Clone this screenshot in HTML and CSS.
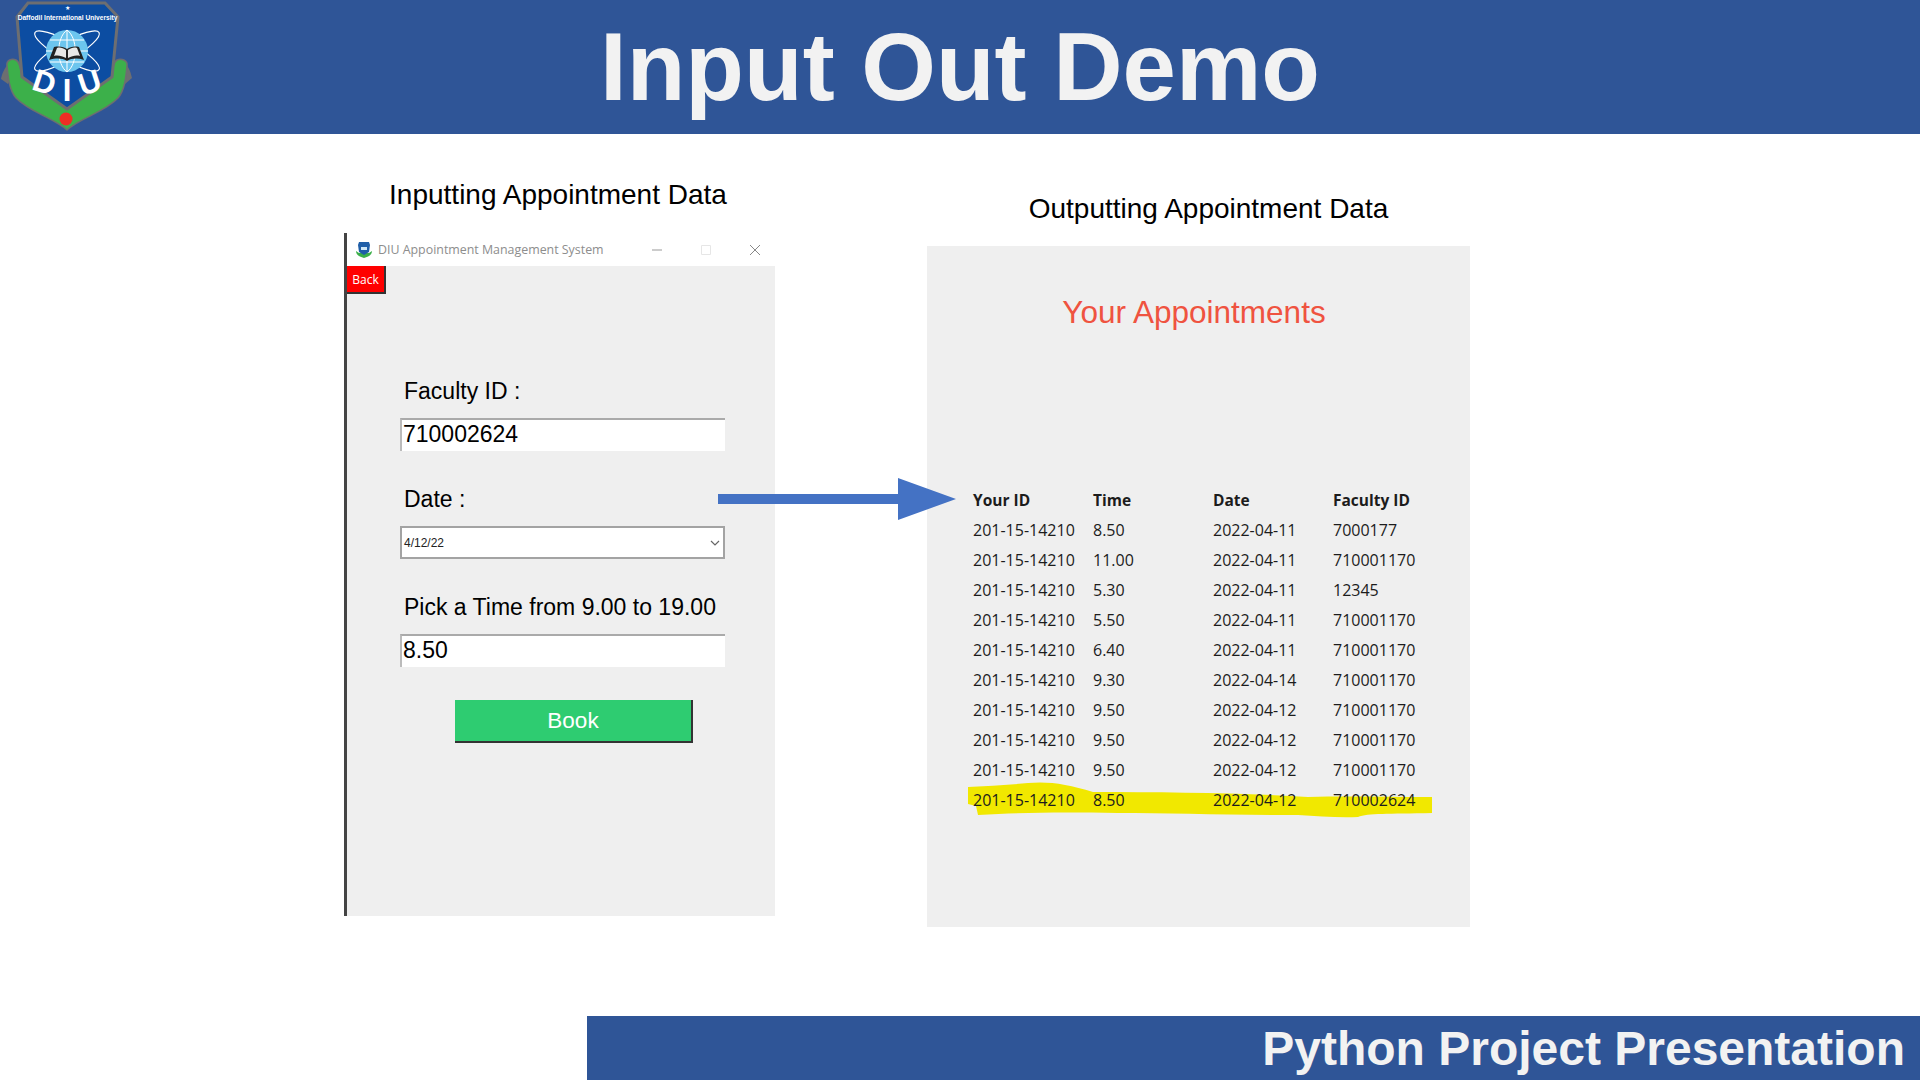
FILE: index.html
```html
<!DOCTYPE html>
<html lang="en">

<head>
    <meta charset="UTF-8">
    <title>Input Out Demo</title>
    <link rel="stylesheet" href="styles.css">
</head>

<body>
    <header class="topBar">
        <svg class="logo" viewBox="0 0 134 134" width="134" height="134">
            <path d="M10 62 C4 68 2 74 1 79 L8 84 L12 76 Z" fill="#6d6e71" />
            <path d="M124 62 C130 68 131 74 132 78 L125 84 L121 76 Z" fill="#6d6e71" />
            <path d="M7 66 C6 60 12 58 16 60 C20 62 21 70 22 77 L67 109 L111 77 C112 70 113 62 117 60 C121 58 128 60 127 66 C126 76 125 90 118 98 C105 112 80 118 67 130 C54 118 29 112 16 98 C9 90 8 76 7 66 Z" fill="#3cb04a" stroke="#6d6e71" stroke-width="1.500" />
            <path d="M28 3 H105 L118 17 L112 77 L67 109 L22 77 L17 17 Z" fill="#0c4da2" stroke="#6d6e71" stroke-width="3" />
            <circle cx="66" cy="119" r="6.500" fill="#ee2e24" />
            <text x="67" y="10" class="logoStar" text-anchor="middle">★</text>
            <text x="67.500" y="20" class="logoName" text-anchor="middle">Daffodil International University</text>
            <ellipse cx="67" cy="51" rx="37" ry="9" transform="rotate(30 67 51)" fill="none" stroke="#fff" stroke-width="1.200" />
            <ellipse cx="67" cy="51" rx="37" ry="9" transform="rotate(-30 67 51)" fill="none" stroke="#fff" stroke-width="1.200" />
            <circle cx="67" cy="51" r="21" fill="#6cc5ee" />
            <path d="M46 51 H88 M50 40 H84 M50 62 H84 M67 30 V72 M67 30 C56 38 56 64 67 72 M67 30 C78 38 78 64 67 72" fill="none" stroke="#fff" stroke-width="1" />
            <path d="M49 60 L54 47 C60 46 64 47 67 49 C70 47 74 46 79 47 L84 60 C78 58 72 58 67 61 C62 58 56 58 49 60 Z" fill="#222" />
            <path d="M54 56 L57 48 C60 47 63 48 66 50 V58 C62 56 58 55 54 56 Z M80 56 L77 48 C74 47 71 48 68 50 V58 C72 56 76 55 80 56 Z" fill="#e8e8e8" />
            <text x="44" y="93" class="logoLetter" text-anchor="middle" transform="rotate(18 44 84)">D</text>
            <text x="67" y="101" class="logoLetter" text-anchor="middle">I</text>
            <text x="90" y="93" class="logoLetter" text-anchor="middle" transform="rotate(-18 90 84)">U</text>
        </svg>
        <h1>Input Out Demo</h1>
    </header>

    <main class="content">
        <section class="inputCol">
            <h2 class="shotTitle">Inputting Appointment Data</h2>
            <div class="window">
                <div class="titleBar">
                    <svg class="appIcon" viewBox="0 0 18 18" width="18" height="18">
                        <path d="M1 10 C1 14 5 16 9 17 C13 16 17 14 17 10 L14 12 H4 Z" fill="#3cb04a" />
                        <path d="M4 1 H14 L15 4 L14 11 L9 14 L4 11 L3 4 Z" fill="#1f5ea8" />
                        <path d="M6 6 H12 V9 H6 Z" fill="#cfe6f5" />
                    </svg>
                    <span class="appName">DIU Appointment Management System</span>
                    <div class="winBtns">
                        <svg viewBox="0 0 12 12" width="12" height="12"><path d="M1 6 H11" stroke="#999" fill="none" /></svg>
                        <svg viewBox="0 0 12 12" width="12" height="12"><path d="M1.500 1.500 H10.500 V10.500 H1.500 Z" stroke="#e6e6e6" fill="none" /></svg>
                        <svg viewBox="0 0 12 12" width="12" height="12"><path d="M1 1 L11 11 M11 1 L1 11" stroke="#888" fill="none" /></svg>
                    </div>
                </div>
                <div class="windowBody">
                    <button class="backBtn">Back</button>
                    <div class="form">
                        <label class="fieldLabel labelFirst">Faculty ID :</label>
                        <div class="textBox">710002624</div>
                        <label class="fieldLabel">Date :</label>
                        <div class="dateBox">
                            <span>4/12/22</span>
                            <svg viewBox="0 0 10 6" width="10" height="6"><path d="M1 1 L5 5 L9 1" stroke="#666" stroke-width="1.200" fill="none" /></svg>
                        </div>
                        <label class="fieldLabel">Pick a Time from 9.00 to 19.00</label>
                        <div class="textBox">8.50</div>
                        <button class="bookBtn">Book</button>
                    </div>
                </div>
            </div>
        </section>

        <section class="outputCol">
            <h2 class="shotTitle">Outputting Appointment Data</h2>
            <div class="panel">
                <h3 class="panelTitle">Your Appointments</h3>
                <svg class="marker" viewBox="0 0 464 37" width="464" height="37">
                    <path d="M0 5 C20 4 40 3 60 1 C80 -1 100 2 125 10 C200 10 280 11 340 15 C380 14 420 15 464 15 V31 C420 32 400 31 390 35 C370 36 350 34 330 33 C260 33 200 31 150 31 C100 30 60 30 10 33 L8 24 L0 22 Z" fill="#f1e800" />
                </svg>
                <table class="apptTable">
                    <thead>
                        <tr><th>Your ID</th><th>Time</th><th>Date</th><th>Faculty ID</th></tr>
                    </thead>
                    <tbody>
                        <tr><td>201-15-14210</td><td>8.50</td><td>2022-04-11</td><td>7000177</td></tr>
                        <tr><td>201-15-14210</td><td>11.00</td><td>2022-04-11</td><td>710001170</td></tr>
                        <tr><td>201-15-14210</td><td>5.30</td><td>2022-04-11</td><td>12345</td></tr>
                        <tr><td>201-15-14210</td><td>5.50</td><td>2022-04-11</td><td>710001170</td></tr>
                        <tr><td>201-15-14210</td><td>6.40</td><td>2022-04-11</td><td>710001170</td></tr>
                        <tr><td>201-15-14210</td><td>9.30</td><td>2022-04-14</td><td>710001170</td></tr>
                        <tr><td>201-15-14210</td><td>9.50</td><td>2022-04-12</td><td>710001170</td></tr>
                        <tr><td>201-15-14210</td><td>9.50</td><td>2022-04-12</td><td>710001170</td></tr>
                        <tr><td>201-15-14210</td><td>9.50</td><td>2022-04-12</td><td>710001170</td></tr>
                        <tr><td>201-15-14210</td><td>8.50</td><td>2022-04-12</td><td>710002624</td></tr>
                    </tbody>
                </table>
            </div>
        </section>

        <svg class="arrow" viewBox="0 0 238 42" width="238" height="42">
            <path d="M0 16 H180 V0 L238 21 L180 42 V26 H0 Z" fill="#4472c4" />
        </svg>
    </main>

    <footer class="bottomBar">
        <span>Python Project Presentation</span>
    </footer>
</body>

</html>
```

FILE: styles.css
```css
* {
    font-family: 'Liberation Sans', Arial, sans-serif;
    box-sizing: border-box;
    margin: 0;
    padding: 0;
}

body {
    display: flex;
    flex-direction: column;
    width: 1920px;
    height: 1080px;
    overflow: hidden;
    background-color: #fff;
}

.topBar {
    position: relative;
    display: flex;
    justify-content: center;
    align-items: center;
    height: 134px;
    background-color: #2f5597;
}

.topBar h1 {
    color: #f2f2f2;
    font-size: 96px;
    font-weight: 700;
    line-height: 134px;
}

.logo {
    position: absolute;
    left: 0;
    top: 0;
}

.logoStar {
    fill: #fff;
    font-size: 6px;
}

.logoName {
    fill: #fff;
    font-size: 6.600px;
    font-weight: 700;
}

.logoLetter {
    fill: #fff;
    font-size: 31px;
    font-weight: 700;
}

.content {
    position: relative;
    flex: 1;
    display: flex;
    padding: 44px 0 0 344px;
}

.shotTitle {
    font-size: 28px;
    font-weight: 400;
    line-height: 34px;
    color: #000;
    text-align: center;
    white-space: nowrap;
}

.inputCol {
    width: 431px;
}

.inputCol .shotTitle {
    margin-bottom: 21px;
    margin-right: 3px;
}

.outputCol {
    width: 543px;
    margin: 13px 0 0 152px;
}

.outputCol .shotTitle {
    margin: 0 0 19px 20px;
    line-height: 36px;
}

/* screenshot of the booking window */
.window {
    height: 683px;
    display: flex;
    flex-direction: column;
    border-left: 3px solid #444;
}

.titleBar {
    display: flex;
    align-items: center;
    height: 33px;
    padding-left: 8px;
    background-color: #fff;
}

.appName {
    margin-left: 5px;
    font-family: 'Open Sans', sans-serif;
    font-size: 12.400px;
    color: #8d8d8d;
    white-space: nowrap;
}

.winBtns {
    display: flex;
    gap: 37px;
    margin-left: auto;
    margin-right: 14px;
}

.windowBody {
    flex: 1;
    background-color: #efefef;
}

.backBtn {
    display: block;
    width: 39px;
    height: 28px;
    border: none;
    border-right: 2px solid #333;
    border-bottom: 2px solid #333;
    background-color: #ff0000;
    color: #fff;
    font-family: 'Open Sans', sans-serif;
    font-size: 12px;
}

.form {
    display: flex;
    flex-direction: column;
    width: 325px;
    margin-left: 53px;
}

.fieldLabel {
    height: 32px;
    margin: 32px 0 11px 4px;
    font-size: 23px;
    line-height: 32px;
    color: #000;
    white-space: nowrap;
}

.labelFirst {
    margin-top: 81px;
}

.textBox {
    height: 33px;
    padding-left: 1px;
    border-top: 2px solid #aaa;
    border-left: 2px solid #bbb;
    background-color: #fff;
    color: #000;
    font-size: 23px;
    line-height: 29px;
}

.dateBox {
    display: flex;
    justify-content: space-between;
    align-items: center;
    height: 33px;
    padding: 0 3px 0 2px;
    border: 2px solid #a3a3a3;
    background-color: #fff;
    color: #222;
    font-family: 'Open Sans', sans-serif;
    font-size: 12px;
}

.bookBtn {
    align-self: flex-start;
    width: 238px;
    height: 43px;
    margin: 33px 0 0 55px;
    border: none;
    border-right: 2px solid #333;
    border-bottom: 2px solid #333;
    background-color: #2ecc71;
    color: #fff;
    font-size: 22.500px;
}

/* screenshot of the results window */
.panel {
    position: relative;
    height: 681px;
    padding: 46px 0 0 46px;
    background-color: #efefef;
}

.panelTitle {
    width: 442px;
    font-size: 31.500px;
    font-weight: 400;
    line-height: 40px;
    color: #ef5340;
    text-align: center;
    white-space: nowrap;
}

.apptTable {
    position: relative;
    margin-top: 153px;
    border-collapse: collapse;
    table-layout: fixed;
    width: 480px;
}

.apptTable th,
.apptTable td {
    width: 120px;
    height: 30px;
    padding: 0;
    font-family: 'Open Sans', sans-serif;
    font-size: 16px;
    color: #1c1c1c;
    text-align: left;
    white-space: nowrap;
}

.apptTable th {
    font-weight: 700;
    font-size: 15.500px;
}

.marker {
    position: absolute;
    left: 41px;
    top: 536px;
}

.arrow {
    position: absolute;
    left: 718px;
    top: 344px;
}

.bottomBar {
    display: flex;
    justify-content: flex-end;
    align-items: center;
    height: 64px;
    margin-left: 587px;
    padding-right: 15px;
    background-color: #2f5597;
    color: #f2f2f2;
    font-size: 48px;
    font-weight: 700;
}

.bottomBar span {
    font-family: inherit;
}
```
